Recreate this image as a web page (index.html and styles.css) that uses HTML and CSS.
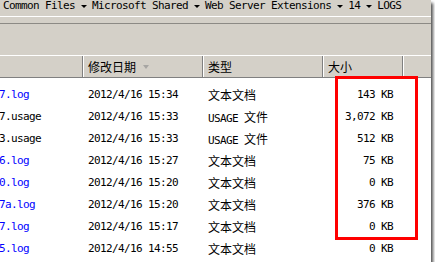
FILE: index.html
```html
<!DOCTYPE html>
<html lang="zh-CN">
<head>
<meta charset="utf-8">
<title>LOGS</title>
<link rel="stylesheet" href="styles.css">
</head>
<body>
<div class="window">
  <div class="crumb">
    <span class="m">Common Files</span><span class="sep"><span class="tri"></span></span><span class="m">Microsoft Shared</span><span class="sep"><span class="tri"></span></span><span class="m">Web Server Extensions</span><span class="sep"><span class="tri"></span></span><span class="m">14</span><span class="sep"><span class="tri"></span></span><span class="m">LOGS</span>
  </div>
  <div class="rule"></div>
  <div class="toolbar"></div>
  <div class="header">
    <div class="hcell c-name"></div>
    <div class="hcell c-date">修改日期<span class="sort"></span></div>
    <div class="hcell c-type">类型</div>
    <div class="hcell c-size">大小</div>
    <div class="hcell c-rest"></div>
  </div>
  <div class="list">
    <div class="row"><div class="c-name m blue">7.log</div><div class="c-date m">2012/4/16 15:34</div><div class="c-type">文本文档</div><div class="c-size m">143 KB</div></div>
    <div class="row"><div class="c-name m">7.usage</div><div class="c-date m">2012/4/16 15:33</div><div class="c-type"><span class="m">USAGE </span>文件</div><div class="c-size m">3,072 KB</div></div>
    <div class="row"><div class="c-name m">3.usage</div><div class="c-date m">2012/4/16 15:33</div><div class="c-type"><span class="m">USAGE </span>文件</div><div class="c-size m">512 KB</div></div>
    <div class="row"><div class="c-name m blue">6.log</div><div class="c-date m">2012/4/16 15:27</div><div class="c-type">文本文档</div><div class="c-size m">75 KB</div></div>
    <div class="row"><div class="c-name m blue">0.log</div><div class="c-date m">2012/4/16 15:20</div><div class="c-type">文本文档</div><div class="c-size m">0 KB</div></div>
    <div class="row"><div class="c-name m blue">7a.log</div><div class="c-date m">2012/4/16 15:20</div><div class="c-type">文本文档</div><div class="c-size m">376 KB</div></div>
    <div class="row"><div class="c-name m blue">7.log</div><div class="c-date m">2012/4/16 15:17</div><div class="c-type">文本文档</div><div class="c-size m">0 KB</div></div>
    <div class="row"><div class="c-name m blue">5.log</div><div class="c-date m">2012/4/16 14:55</div><div class="c-type">文本文档</div><div class="c-size m">0 KB</div></div>
  </div>
  <div class="highlight"></div>
</div>
</body>
</html>
```

FILE: styles.css
```css
html, body {
  margin: 0;
  padding: 0;
  background: #ffffff;
}
body {
  font-family: "Noto Sans CJK SC", "Liberation Sans", sans-serif;
  font-size: 12px;
  color: #000;
}
.window {
  position: relative;
  width: 431px;
  height: 262px;
  background: #d4d0c8;
  box-shadow: 2px 3px 3px rgba(0, 0, 0, 0.7);
  overflow: hidden;
  display: flex;
  flex-direction: column;
}
.m {
  font-family: "DejaVu Sans Mono", "Liberation Mono", "Noto Sans CJK SC", monospace;
  font-size: 11px;
  letter-spacing: -0.62px;
}
.crumb {
  height: 16px;
  line-height: 12px;
  padding-left: 3px;
  white-space: nowrap;
  display: flex;
  align-items: flex-start;
}
.sep {
  display: inline-flex;
  width: 17px;
  height: 12px;
  justify-content: center;
  align-items: center;
}
.tri {
  width: 0;
  height: 0;
  border-left: 3px solid transparent;
  border-right: 3px solid transparent;
  border-top: 3px solid #000;
  margin-top: 1px;
}
.rule {
  height: 6px;
  border-top: 1px solid #ffffff;
  border-bottom: 1px solid #8c8a85;
}
.toolbar {
  height: 31px;
}
.header {
  display: flex;
  height: 21px;
  line-height: 21px;
  border-top: 1px solid #ffffff;
  border-bottom: 1px solid #808080;
  white-space: nowrap;
}
.hcell {
  box-sizing: border-box;
  border-left: 1px solid #ffffff;
  border-right: 1px solid #808080;
  padding-left: 4px;
  display: flex;
  align-items: center;
}
.header .c-name { width: 83px; border-left: none; }
.header .c-date { width: 120px; }
.header .c-type { width: 120px; }
.header .c-size { width: 80px; }
.header .c-rest { flex: 1; border-right: none; }
.sort {
  width: 0;
  height: 0;
  border-left: 3px solid transparent;
  border-right: 3px solid transparent;
  border-top: 4px solid #a7a6a3;
  margin-left: 7px;
  margin-top: 1px;
}
.list {
  flex: 1;
  background: #ffffff;
  padding-top: 6px;
}
.row {
  display: flex;
  height: 22px;
  line-height: 22px;
  white-space: nowrap;
}
.row .c-name {
  width: 83px;
  margin-left: -1px;
  padding-right: 1px;
}
.row .c-date {
  width: 115px;
  padding-left: 5px;
}
.row .c-type {
  width: 115px;
  padding-left: 5px;
}
.row .c-size {
  width: 70px;
  padding-right: 10px;
  text-align: right;
}
.blue { color: #0000ff; }
.highlight {
  position: absolute;
  left: 335px;
  top: 76px;
  width: 77px;
  height: 158px;
  border: 3px solid #ff0000;
}
```
